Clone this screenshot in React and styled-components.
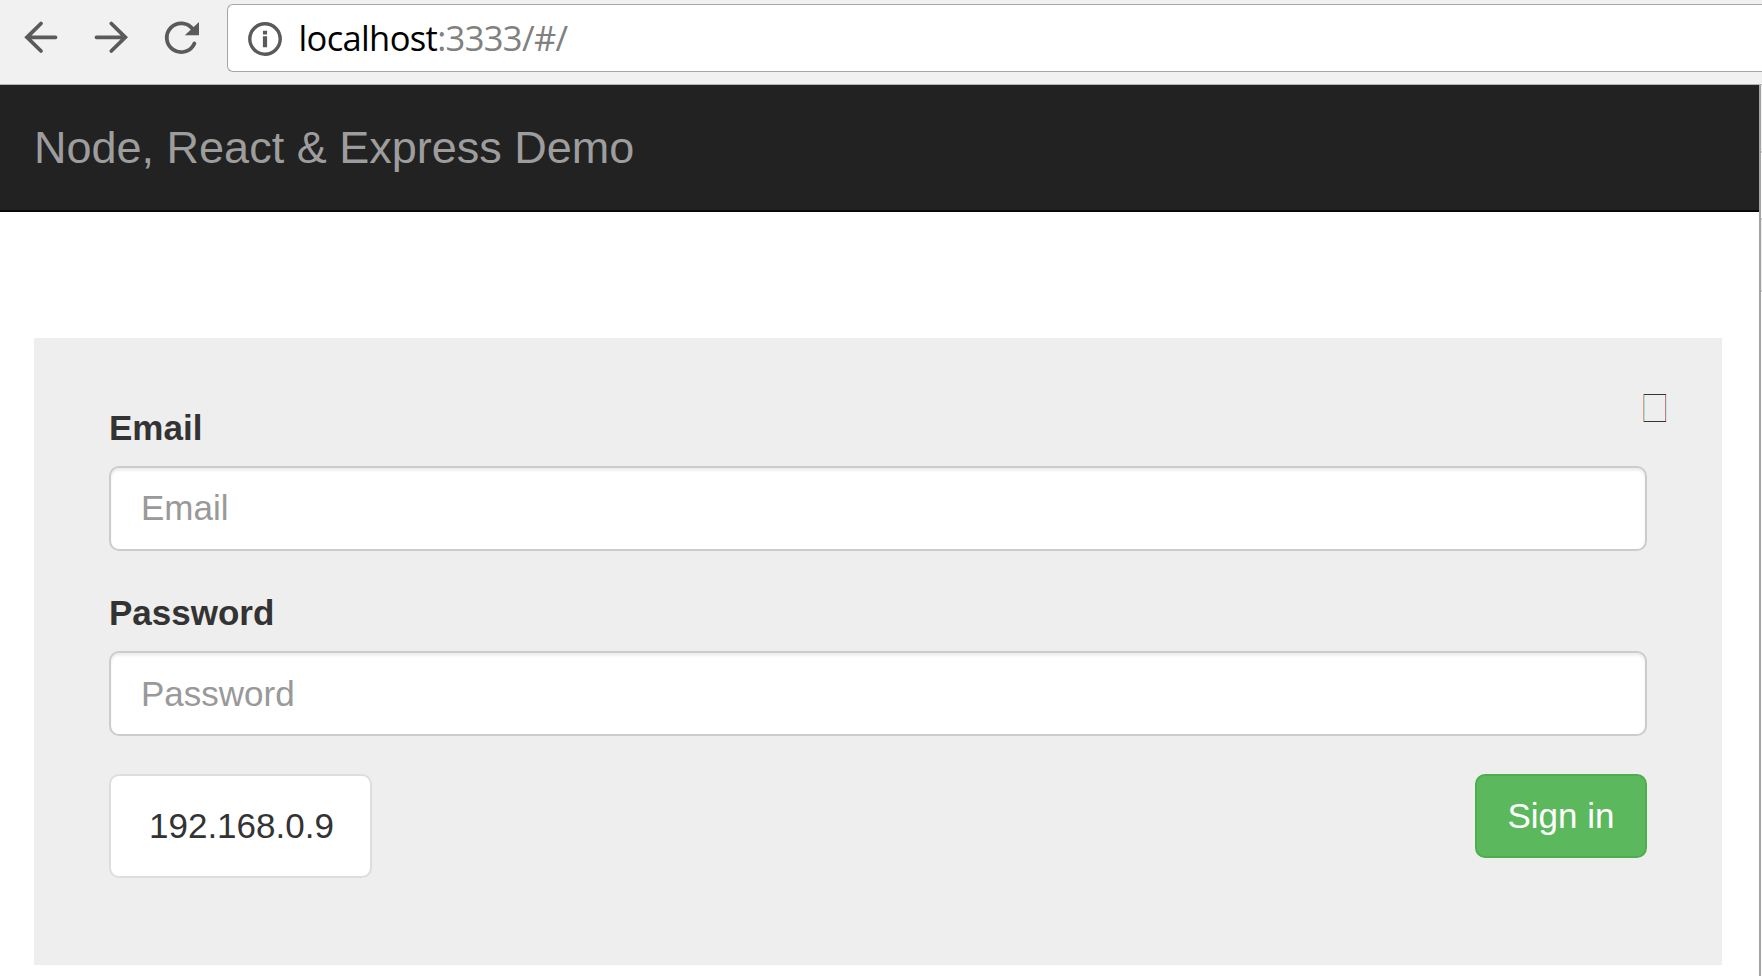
import React from 'react';
import styled, { createGlobalStyle } from 'styled-components';

const GlobalStyle = createGlobalStyle`
  *, *::before, *::after { box-sizing: border-box; }
  body {
    margin: 0;
    background: #fff;
    color: #333;
    font: 35px/50px "Liberation Sans", Arial, sans-serif;
    overflow: hidden;
  }
`;

const Window = styled.div`
  display: flex;
  flex-direction: column;
  width: 1762px;
  height: 976px;
`;

const Toolbar = styled.header`
  display: flex;
  align-items: flex-start;
  height: 85px;
  padding-top: 4px;
  background: #f1f1f1;
  border-bottom: 1px solid #b2b5b2;
`;

const NavIcons = styled.svg`
  flex: none;
  width: 227px;
  height: 68px;
`;

const AddressBar = styled.div`
  display: flex;
  align-items: center;
  flex: 1;
  height: 68px;
  background: #fff;
  border: 1px solid #a6a6a6;
  border-right: 0;
  border-radius: 6px 0 0 6px;
`;

const InfoIcon = styled.svg`
  flex: none;
  width: 36px;
  height: 36px;
  margin: 2px 16px 0 18.5px;
`;

const Url = styled.div`
  font: 34.5px/48px "Open Sans", "Noto Sans", sans-serif;
  white-space: nowrap;
`;

const UrlPart = styled.span`
  color: ${(p) => (p.$muted ? '#808080' : '#000')};
  letter-spacing: ${(p) => p.$spacing};
`;

const Body = styled.div`
  display: flex;
  flex: 1;
  min-height: 0;
`;

const Page = styled.div`
  flex: 1;
`;

const Edge = styled.div`
  display: flex;
  flex-direction: column;
  width: 3px;
  background: #fff;
  border-left: 2px solid #a3a3a3;
`;

const EdgeSection = styled.div`
  height: ${(p) => p.$height};
  background: ${(p) => p.$fill};
  border-bottom: 2px solid #ccc;
`;

const Navbar = styled.nav`
  height: 127px;
  padding: 38px 34px 0;
  background: #222;
  border-bottom: 2px solid #080808;
`;

const Brand = styled.div`
  color: #9d9d9d;
  font-size: 45px;
  line-height: 50px;
`;

const Panel = styled.main`
  width: 1688px;
  height: 627px;
  margin: 126px 0 0 34px;
  padding: 56px 75px 0;
  background: #eee;
`;

const Field = styled.div`
  margin-bottom: 38px;
`;

const LabelRow = styled.div`
  display: flex;
  justify-content: space-between;
  height: ${(p) => p.$height};
  margin-right: -20px;
`;

const Label = styled.label`
  align-self: flex-end;
  margin-bottom: 13px;
  font-weight: 700;
`;

const MissingGlyph = styled.svg`
  width: 24px;
  height: 28px;
`;

const Input = styled.input`
  display: block;
  width: 100%;
  height: 85px;
  padding: ${(p) => (p.type === 'password' ? '1px 30px 0' : '0 30px 1px')};
  font: inherit;
  color: #555;
  background: #fff;
  border: 2px solid #ccc;
  border-radius: 10px;
  box-shadow: inset 0 2.5px 2.5px rgba(0, 0, 0, 0.075);
  &::placeholder { color: #999; opacity: 1; }
`;

const Actions = styled.div`
  display: flex;
  justify-content: space-between;
  align-items: flex-start;
`;

const Address = styled.div`
  width: 263px;
  height: 104px;
  padding: 25px 0 0 38px;
  background: #fff;
  border: 2px solid #ddd;
  border-radius: 10px;
`;

const SubmitButton = styled.button`
  width: 172px;
  height: 84px;
  padding: 0;
  font: inherit;
  color: #fff;
  background: #5cb85c;
  border: 2px solid #4cae4c;
  border-radius: 10px;
`;

export default function App() {
  return (
    <Window>
      <GlobalStyle />
      <Toolbar>
        <NavIcons viewBox="0 4 227 68" fill="none" stroke="#5a5a5a" strokeWidth="3.8" strokeLinecap="round">
          <path d="M55.5 37.3H27M41 23.5L27 37.3L41 51" />
          <path d="M96.5 37.3H125.3M111.3 23.5L125.3 37.3L111.3 51" />
          <path d="M193 29.5A14.4 14.4 0 1 0 194.4 43.4" />
          <path d="M199 22V35.2H184.8Z" fill="#5a5a5a" stroke="none" />
        </NavIcons>
        <AddressBar>
          <InfoIcon viewBox="0 0 36 36" fill="none" stroke="#5a5a5a">
            <circle cx="18" cy="18" r="15.2" strokeWidth="3.4" />
            <path d="M18 9.8V13.6M18 15.3V26.2" strokeWidth="4.2" />
          </InfoIcon>
          <Url>
            <UrlPart $spacing="-0.65px">localhost</UrlPart>
            <UrlPart $muted $spacing="-0.65px">:3333/#/</UrlPart>
          </Url>
        </AddressBar>
      </Toolbar>
      <Body>
        <Page>
          <Navbar>
            <Brand>Node, React &amp; Express Demo</Brand>
          </Navbar>
          <Panel>
            <Field>
              <LabelRow $height="72px">
                <Label htmlFor="email">Email</Label>
                <MissingGlyph viewBox="0 0 24 28" shapeRendering="crispEdges">
                  <path d="M0.5 0V28" stroke="#e0a070" />
                  <path d="M1.5 0V28" stroke="#a4dcea" />
                  <path d="M22.5 0V28" stroke="#c87c7c" />
                  <path d="M23.5 0V28" stroke="#c4e8f0" />
                  <path d="M1 0.5H23M1 27.5H23" stroke="#333" />
                </MissingGlyph>
              </LabelRow>
              <Input id="email" type="email" placeholder="Email" />
            </Field>
            <Field>
              <LabelRow $height="62px">
                <Label htmlFor="password">Password</Label>
              </LabelRow>
              <Input id="password" type="password" placeholder="Password" />
            </Field>
            <Actions>
              <Address>192.168.0.9</Address>
              <SubmitButton type="button">Sign in</SubmitButton>
            </Actions>
          </Panel>
        </Page>
        <Edge>
          <EdgeSection $height="68px" $fill="#f1f1f1" />
          <EdgeSection $height="67px" $fill="#fff" />
          <EdgeSection $height="72px" $fill="#eee" />
        </Edge>
      </Body>
    </Window>
  );
}
